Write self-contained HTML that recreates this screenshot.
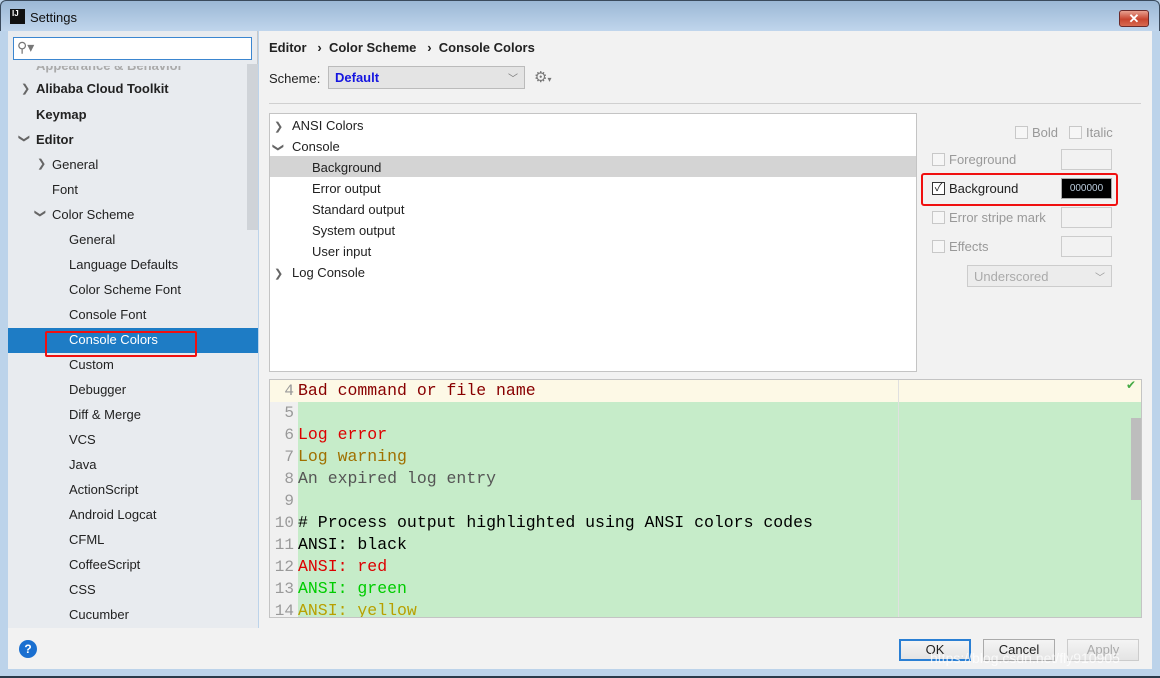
<!DOCTYPE html>
<html><head><meta charset="utf-8"><style>
*{box-sizing:border-box;margin:0;padding:0}
body{width:1160px;height:678px;overflow:hidden;background:#bcd3ea;font-family:"Liberation Sans","Noto Sans CJK SC",sans-serif;font-size:13px;color:#222;position:relative}
.a{position:absolute}
.title{left:0;top:0;width:1160px;height:31px;background:linear-gradient(#9bb7d5,#c0d5ec);border:1px solid #3a4a5c;border-bottom:none;border-radius:6px 6px 0 0}
.side{left:8px;top:31px;width:250px;height:597px;background:#e8ebef;border-right:1px solid #c8c8c8}
.main{left:259px;top:31px;width:893px;height:597px;background:#f2f2f2}
.bottom{left:8px;top:628px;width:1144px;height:41px;background:#f2f2f2}
.it{position:absolute;font-size:13px;white-space:nowrap}
.b{font-weight:bold}
.arr{position:absolute;font-size:11px;color:#666}
.mono{font-family:"Liberation Mono",monospace;font-size:16.5px;white-space:pre}
.ln{position:absolute;left:0;width:24px;text-align:right;color:#999;font-family:"Liberation Mono",monospace;font-size:16px}
.cb{position:absolute;width:13px;height:13px;border:1px solid #c8c8c8;background:#f6f6f6}
.gray{color:#999}
.sw{position:absolute;width:51px;height:21px;border:1px solid #ccc;background:#f2f2f2}
.btn{position:absolute;top:639px;height:22px;border:1px solid #aaa;background:linear-gradient(#f4f4f4,#e4e4e4);text-align:center;font-size:13px;line-height:20px}
</style></head><body>
<div class="a title"></div>
<div class="a" style="left:10px;top:9px;width:15px;height:15px;background:#111;color:#fff;font-size:8px;font-weight:bold;line-height:9px;padding-left:2px">IJ</div>
<div class="a" style="left:30px;top:10px;font-size:13px;color:#111">Settings</div>
<div class="a" style="left:1119px;top:10px;width:30px;height:17px;border:1px solid #6b2a2a;border-radius:3px;background:linear-gradient(#e8a090,#c8452f 55%,#d86a50);color:#fff;font-weight:bold;text-align:center;line-height:15px;font-size:13px">✕</div>
<div class="a" style="left:0;top:31px;width:8px;height:647px;background:#bcd3ea"></div>
<div class="a" style="left:1152px;top:31px;width:8px;height:647px;background:#bcd3ea"></div>
<div class="a" style="left:0;top:669px;width:1160px;height:9px;background:#bcd3ea;border-bottom:2px solid #2a3a4a"></div>

<div class="a side">
 <div class="a" style="left:5px;top:6px;width:239px;height:23px;background:#fff;border:1px solid #3b86d0"><span style="position:absolute;left:3px;top:1px;color:#777;font-size:14px">⚲▾</span></div>
 <div class="a" style="left:239px;top:33px;width:11px;height:564px;background:#e8ebef"></div>
 <div class="a" style="left:239px;top:33px;width:11px;height:166px;background:#cfd3d8"></div>
 <div class="it b" style="left:28px;top:27px;color:#aaa;clip-path:inset(8px 0 0 0)">Appearance &amp; Behavior</div>
 <div class="arr" style="left:13px;top:51px">❯</div><div class="it b" style="left:28px;top:50px">Alibaba Cloud Toolkit</div>
 <div class="it b" style="left:28px;top:76px">Keymap</div>
 <div class="arr" style="left:12px;top:101px;transform:rotate(90deg)">❯</div><div class="it b" style="left:28px;top:101px">Editor</div>
 <div class="arr" style="left:29px;top:126px">❯</div><div class="it" style="left:44px;top:126px">General</div>
 <div class="it" style="left:44px;top:151px">Font</div>
 <div class="arr" style="left:28px;top:176px;transform:rotate(90deg)">❯</div><div class="it" style="left:44px;top:176px">Color Scheme</div>
 <div class="it" style="left:61px;top:201px">General</div>
 <div class="it" style="left:61px;top:226px">Language Defaults</div>
 <div class="it" style="left:61px;top:251px">Color Scheme Font</div>
 <div class="it" style="left:61px;top:276px">Console Font</div>
 <div class="a" style="left:0;top:297px;width:250px;height:25px;background:#1e7cc5"></div>
 <div class="it" style="left:61px;top:301px;color:#fff">Console Colors</div>
 <div class="a" style="left:37px;top:300px;width:152px;height:26px;border:2px solid #f01010;border-radius:2px"></div>
 <div class="it" style="left:61px;top:326px">Custom</div>
 <div class="it" style="left:61px;top:351px">Debugger</div>
 <div class="it" style="left:61px;top:376px">Diff &amp; Merge</div>
 <div class="it" style="left:61px;top:401px">VCS</div>
 <div class="it" style="left:61px;top:426px">Java</div>
 <div class="it" style="left:61px;top:451px">ActionScript</div>
 <div class="it" style="left:61px;top:476px">Android Logcat</div>
 <div class="it" style="left:61px;top:501px">CFML</div>
 <div class="it" style="left:61px;top:526px">CoffeeScript</div>
 <div class="it" style="left:61px;top:551px">CSS</div>
 <div class="it" style="left:61px;top:576px">Cucumber</div>
</div>

<div class="a main">
 <div class="it b" style="left:10px;top:9px">Editor &nbsp;&nbsp;› &nbsp;Color Scheme &nbsp;&nbsp;› &nbsp;Console Colors</div>
 <div class="it" style="left:10px;top:40px">Scheme:</div>
 <div class="a" style="left:69px;top:35px;width:197px;height:23px;border:1px solid #bbb;background:#e4e4e4"><span style="position:absolute;left:6px;top:3px;color:#1515e0;font-weight:bold">Default</span><span style="position:absolute;right:6px;top:3px;color:#777;font-size:10px">﹀</span></div>
 <div class="it" style="left:275px;top:37px;color:#777;font-size:15px">⚙<span style="font-size:8px">▾</span></div>
 <div class="a" style="left:10px;top:72px;width:872px;height:1px;background:#d0d0d0"></div>
 <div class="a" style="left:10px;top:82px;width:648px;height:259px;background:#fff;border:1px solid #c4c4c4">
  <div class="arr" style="left:4px;top:6px">❯</div><div class="it" style="left:22px;top:4px">ANSI Colors</div>
  <div class="arr" style="left:4px;top:27px;transform:rotate(90deg)">❯</div><div class="it" style="left:22px;top:25px">Console</div>
  <div class="a" style="left:0;top:42px;width:646px;height:21px;background:#d4d4d4"></div>
  <div class="it" style="left:42px;top:46px">Background</div>
  <div class="it" style="left:42px;top:67px">Error output</div>
  <div class="it" style="left:42px;top:88px">Standard output</div>
  <div class="it" style="left:42px;top:109px">System output</div>
  <div class="it" style="left:42px;top:130px">User input</div>
  <div class="arr" style="left:4px;top:153px">❯</div><div class="it" style="left:22px;top:151px">Log Console</div>
 </div>
 <div class="cb" style="left:756px;top:95px"></div><div class="it gray" style="left:773px;top:94px">Bold</div>
 <div class="cb" style="left:810px;top:95px"></div><div class="it gray" style="left:827px;top:94px">Italic</div>
 <div class="cb" style="left:673px;top:122px"></div><div class="it gray" style="left:690px;top:121px">Foreground</div>
 <div class="sw" style="left:802px;top:118px"></div>
 <div class="cb" style="left:673px;top:151px;border-color:#333;background:#fff;font-size:11px;line-height:10px;text-align:center">✓</div><div class="it" style="left:690px;top:150px">Background</div>
 <div class="sw" style="left:802px;top:147px;background:#000;border-color:#aaa;color:#bcd;font-size:10px;text-align:center;line-height:19px">000000</div>
 <div class="a" style="left:662px;top:142px;width:197px;height:33px;border:2px solid #f01010;border-radius:3px"></div>
 <div class="cb" style="left:673px;top:180px"></div><div class="it gray" style="left:690px;top:179px">Error stripe mark</div>
 <div class="sw" style="left:802px;top:176px"></div>
 <div class="cb" style="left:673px;top:209px"></div><div class="it gray" style="left:690px;top:208px">Effects</div>
 <div class="sw" style="left:802px;top:205px"></div>
 <div class="a" style="left:708px;top:234px;width:145px;height:22px;border:1px solid #ccc;background:#ececec"><span style="position:absolute;left:6px;top:3px;color:#aaa">Underscored</span><span style="position:absolute;right:6px;top:3px;color:#999;font-size:10px">﹀</span></div>

 <div class="a" style="left:10px;top:348px;width:873px;height:239px;background:#c6ecc9;border:1px solid #c4c4c4;overflow:hidden">
  <div class="a" style="left:0;top:0;width:28px;height:239px;background:#f0f0f0"></div>
  <div class="a" style="left:0;top:0;width:873px;height:22px;background:#fdf9e6"></div>
  <div class="a" style="left:0;top:0;width:28px;height:22px;background:#fdf9e6"></div>
  <div class="a" style="left:628px;top:0;width:1px;height:239px;background:#e0e0e0"></div>
  <div class="a" style="left:861px;top:38px;width:10px;height:82px;background:#bdbdbd"></div>
  <div class="a" style="left:856px;top:-2px;color:#4a4;font-size:12px">✔</div>
  <div class="ln" style="top:2px">4</div><div class="a mono" style="left:28px;top:1px;color:#800">Bad command or file name</div>
  <div class="ln" style="top:24px">5</div>
  <div class="ln" style="top:46px">6</div><div class="a mono" style="left:28px;top:45px;color:#d00">Log error</div>
  <div class="ln" style="top:68px">7</div><div class="a mono" style="left:28px;top:67px;color:#a07000">Log warning</div>
  <div class="ln" style="top:90px">8</div><div class="a mono" style="left:28px;top:89px;color:#555">An expired log entry</div>
  <div class="ln" style="top:112px">9</div>
  <div class="ln" style="top:134px">10</div><div class="a mono" style="left:28px;top:133px;color:#000"># Process output highlighted using ANSI colors codes</div>
  <div class="ln" style="top:156px">11</div><div class="a mono" style="left:28px;top:155px;color:#000">ANSI: black</div>
  <div class="ln" style="top:178px">12</div><div class="a mono" style="left:28px;top:177px;color:#d00">ANSI: red</div>
  <div class="ln" style="top:200px">13</div><div class="a mono" style="left:28px;top:199px;color:#0c0">ANSI: green</div>
  <div class="ln" style="top:222px">14</div><div class="a mono" style="left:28px;top:221px;color:#b8a000">ANSI: yellow</div>
 </div>
</div>

<div class="a bottom"></div>
<div class="a" style="left:19px;top:640px;width:18px;height:18px;border-radius:9px;background:#1a6fd0;color:#fff;font-weight:bold;text-align:center;line-height:18px;font-size:12px">?</div>
<div class="btn" style="left:899px;width:72px;border:2px solid #2a7fd4;line-height:18px">OK</div>
<div class="btn" style="left:983px;width:72px">Cancel</div>
<div class="btn" style="left:1067px;width:72px;color:#aaa;border-color:#ccc">Apply</div>
<div class="a" style="left:930px;top:650px;color:rgba(255,255,255,.75);font-size:14px">https://blog.csdn.net/fly910905</div>
</body></html>
